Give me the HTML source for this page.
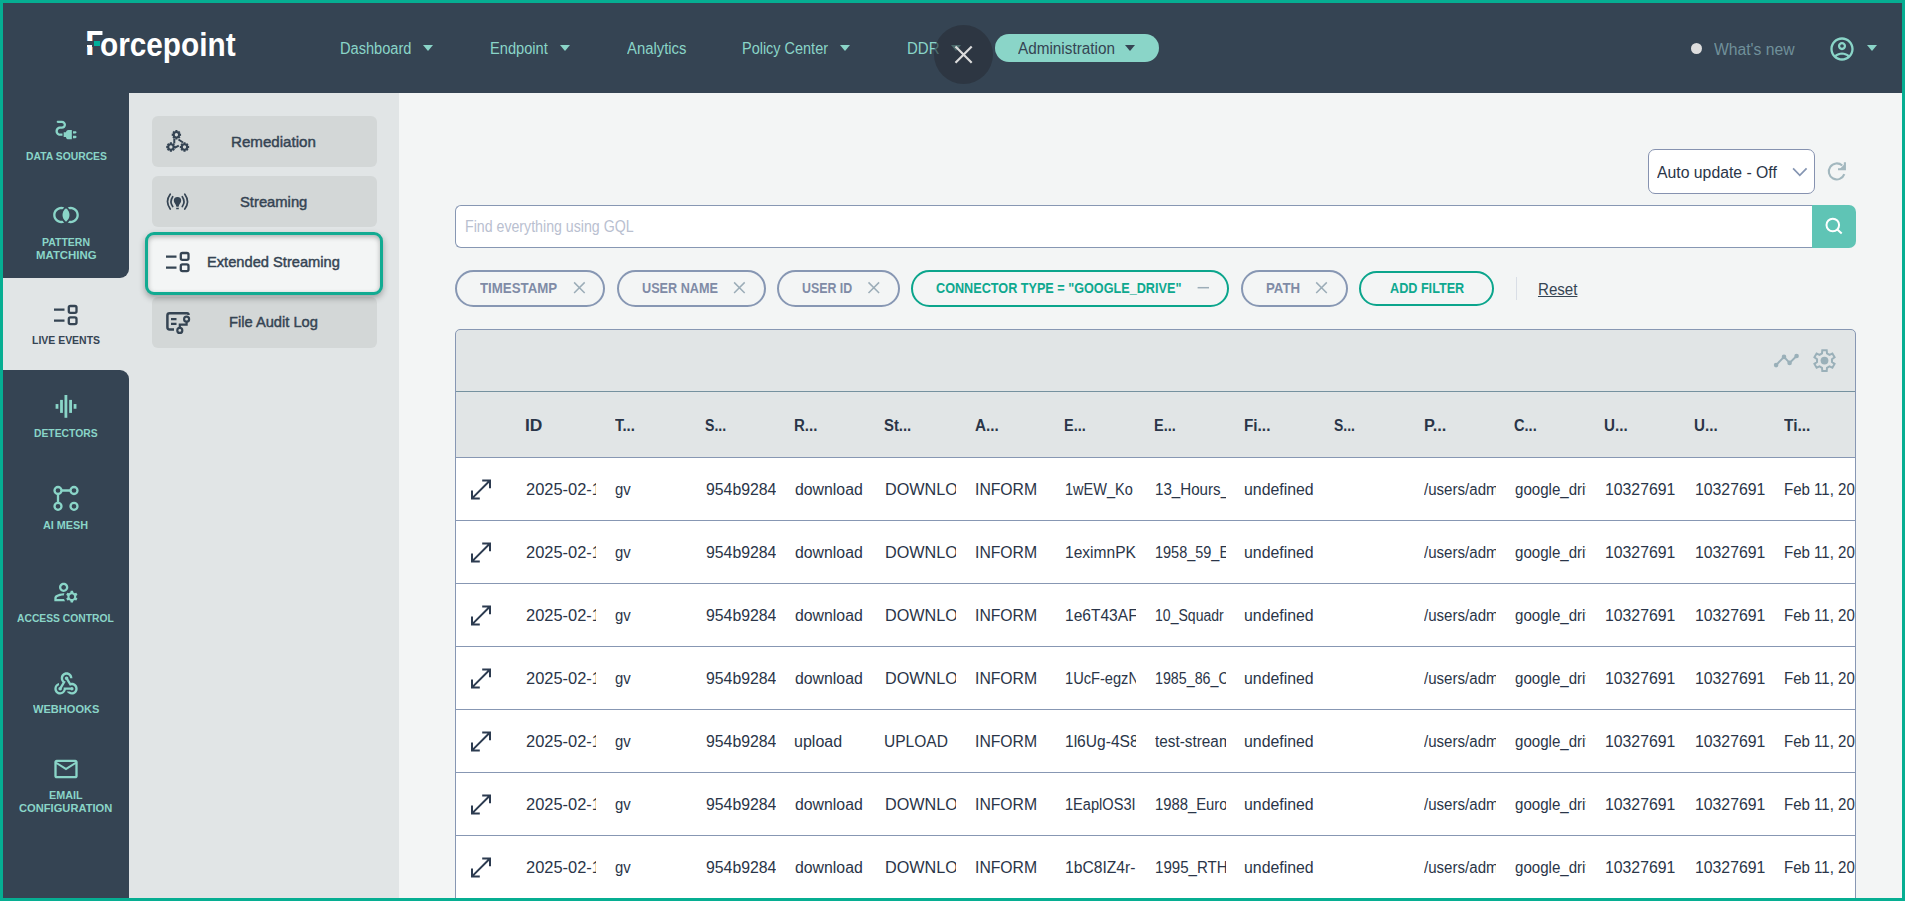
<!DOCTYPE html>
<html lang="en">
<head>
<meta charset="utf-8">
<title>Forcepoint - Extended Streaming</title>
<style>
html,body{margin:0;padding:0}
body{width:1905px;height:901px;position:relative;overflow:hidden;background:#f3f5f5;font-family:"Liberation Sans",sans-serif;color:#2a3548}
.abs,.t,svg.i{position:absolute}
.t{white-space:pre;line-height:1;transform-origin:0 0;display:block}
#frame{position:absolute;left:0;top:0;width:1899px;height:895px;border:3px solid #06ae92;z-index:50;pointer-events:none}
/* header */
#hdr{position:absolute;left:0;top:0;width:1905px;height:93px;background:#354453}
.tri{position:absolute;width:0;height:0;border-left:5.5px solid transparent;border-right:5.5px solid transparent;border-top:6.5px solid #8ad5c8}
#adminpill{position:absolute;left:995px;top:34px;width:164px;height:28px;border-radius:14px;background:#8ad5c8}
#closec{position:absolute;left:934px;top:25px;width:59px;height:59px;border-radius:50%;background:rgba(40,47,57,.64)}
#dot{position:absolute;left:1690.6px;top:42.5px;width:11px;height:11px;border-radius:50%;background:#dedede}
/* sidebar */
#side{position:absolute;left:0;top:93px;width:129px;height:808px;background:#e1e5e6}
#sidecap1{position:absolute;left:0;top:93px;width:129px;height:184.6px;background:#354453;border-bottom-right-radius:9px}
#sidecap2{position:absolute;left:0;top:370px;width:129px;height:531px;background:#354453;border-top-right-radius:9px}
/* subnav */
#sub{position:absolute;left:129px;top:93px;width:270px;height:808px;background:#e1e5e6}
.sbtn{position:absolute;left:152px;width:225px;height:51px;border-radius:6px;background:#d3d7d7}
#sact{position:absolute;left:145px;top:232px;width:232px;height:57px;border:3px solid #12ab92;border-radius:9px;background:#f3f5f5;box-shadow:0 3px 6px rgba(0,0,0,.3), inset 0 2px 5px rgba(0,0,0,.28)}
/* main */
#sel{position:absolute;left:1648px;top:149px;width:165px;height:43px;border:1px solid #8692b0;border-radius:7px;background:#fff}
#search{position:absolute;left:455px;top:205px;width:1356px;height:41px;border:1px solid #8797b3;border-right:none;border-radius:6px 0 0 6px;background:#fff}
#sbtn{position:absolute;left:1811.5px;top:205px;width:44.5px;height:43px;border-radius:0 7px 7px 0;background:#5fc4b5}
.chip{position:absolute;top:270px;height:33px;border:2px solid #8797b3;border-radius:19px;box-sizing:content-box}
.chip.tl{border-color:#0ba58c}
#vdiv{position:absolute;left:1516px;top:277px;width:1px;height:23px;background:#d9dee6}
#tbl{position:absolute;left:455px;top:329px;width:1399px;height:580px;border:1px solid #8797b3;border-radius:5px 5px 0 0;background:#e1e5e6}
#tline1{position:absolute;left:456px;top:390.5px;width:1399px;height:1px;background:#75919f}
#tline2{position:absolute;left:456px;top:457px;width:1399px;height:1px;background:#8797b3}
.row{position:absolute;left:456px;width:1399px;height:62px;background:#fff;border-bottom:1px solid #8797b3;overflow:hidden}
.c{position:absolute;top:0;width:72.5px;height:62px;overflow:hidden}
</style>
</head>
<body>
<header>
<div id="hdr"></div>
<div class="abs" id="logo" aria-label="Forcepoint"><span class="t" style="left:85.10px;top:26.20px;font-size:34.2px;font-weight:700;color:#fff;transform:scaleX(1.0000);clip-path:inset(0 3.5px 0 0);">F</span><i class="abs" style="left:86px;top:41.4px;width:20px;height:5.6px;background:#354453"></i><i class="abs" style="left:87.1px;top:45.2px;width:4.9px;height:2px;background:#fff"></i><span class="t" style="left:99.72px;top:26.50px;font-size:34px;font-weight:700;color:#fff;transform:scaleX(0.8752);">orcepoint</span><i class="abs" style="left:93.9px;top:40.5px;width:5.7px;height:5.6px;background:#00af9a"></i></div>
<nav>
<a><span class="t" style="left:340.09px;top:41.00px;font-size:16px;color:#8ad5c8;transform:scaleX(0.9126);">Dashboard</span><i class="tri" style="left:422.5px;top:45.2px"></i></a>
<a><span class="t" style="left:489.59px;top:41.00px;font-size:16px;color:#8ad5c8;transform:scaleX(0.9136);">Endpoint</span><i class="tri" style="left:560px;top:45.2px"></i></a>
<a><span class="t" style="left:627.00px;top:41.00px;font-size:16px;color:#8ad5c8;transform:scaleX(0.9278);">Analytics</span></a>
<a><span class="t" style="left:742.10px;top:41.00px;font-size:16px;color:#8ad5c8;transform:scaleX(0.9038);">Policy Center</span><i class="tri" style="left:840px;top:45.2px"></i></a>
<a><span class="t" style="left:907.26px;top:41.00px;font-size:16px;color:#8ad5c8;transform:scaleX(0.9363);">DDR</span><i class="tri" style="left:950.5px;top:45.2px"></i></a>
<a><div id="adminpill"></div><span class="t" style="left:1017.50px;top:41.00px;font-size:16px;color:#354453;transform:scaleX(0.9564);">Administration</span><i class="tri" style="left:1125px;top:45.2px;border-top-color:#354453"></i></a>
<div id="closec"></div>
<svg class="i" style="left:950px;top:41px" width="28" height="28" viewBox="950 41 28 28" ><path d="M955.5,46.500L971.700,62.700M971.700,46.500L955.5,62.700" stroke="#dcdcdc" stroke-width="2.2" fill="none"/></svg>
</nav>
<div id="dot"></div>
<span class="t" style="left:1714.00px;top:41.70px;font-size:16px;color:#70909a;transform:scaleX(0.9801);">What&#x27;s new</span>
<svg class="i" style="left:1828px;top:34.5px" width="28" height="28" viewBox="0 0 24 24" ><g fill="#8ad5c8"><path d="M12 2C6.48 2 2 6.48 2 12s4.48 10 10 10 10-4.480 10-10S17.52 2 12 2zM7.35 18.5C8.66 17.56 10.26 17 12 17s3.34.56 4.65 1.5C15.34 19.44 13.74 20 12 20s-3.34-.56-4.65-1.5zm10.79-1.38C16.45 15.8 14.32 15 12 15s-4.45.8-6.14 2.12C4.7 15.73 4 13.95 4 12c0-4.42 3.58-8 8-8s8 3.58 8 8c0 1.95-.7 3.73-1.86 5.12zM12 6c-1.93 0-3.5 1.57-3.5 3.5S10.07 13 12 13s3.5-1.57 3.5-3.5S13.93 6 12 6zm0 5c-.83 0-1.5-.67-1.5-1.5S11.17 8 12 8s1.500.67 1.5 1.5S12.830 11 12 11z"/></g></svg>
<i class="tri" style="left:1867px;top:45.3px"></i>
</header>
<aside>
<div id="side"></div>
<div id="sidecap1"></div><div id="sidecap2"></div>
<a><svg class="i" style="left:52px;top:115.6px" width="28" height="28" viewBox="0 0 24 24" ><g fill="#8ad5c8"><path d="M21,14c0-0.55-0.45-1-1-1h-2v2h2C20.55,15,21,14.55,21,14z"/><path d="M20,17h-2v2h2c0.55,0,1-0.45,1-1C21,17.45,20.55,17,20,17z"/><path d="M12,14h-2v4h2c0,1.1,0.9,2,2,2h3v-8h-3C12.9,12,12,12.9,12,14z"/><path d="M5,13c0-1.1,0.9-2,2-2h1.5c1.93,0,3.5-1.57,3.5-3.5S10.430,4,8.5,4H5C4.45,4,4,4.45,4,5c0,0.55,0.45,1,1,1h3.5C9.33,6,10,6.67,10,7.5S9.33,9,8.5,9H7c-2.21,0-4,1.79-4,4c0,2.21,1.79,4,4,4h2v-2H7C5.9,15,5,14.1,5,13z"/></g></svg><span class="t" style="left:25.60px;top:151.30px;font-size:11px;font-weight:700;color:#8ad5c8;transform:scaleX(0.9415);">DATA SOURCES</span></a>
<a><svg class="i" style="left:52px;top:201.1px" width="28" height="28" viewBox="0 0 24 24" ><g fill="#8ad5c8"><path d="M12 6.26A7 7 0 0 1 12 17.74A7 7 0 0 1 12 6.26z"/><path d="M9.04 16.87C8.71 16.95 8.36 17 8 17c-2.76 0-5-2.24-5-5s2.240-5 5-5c.36 0 .71.05 1.04.13.39-.56.88-1.120 1.490-1.630C9.750 5.190 8.900 5 8 5c-3.860 0-7 3.140-7 7s3.140 7 7 7c.9 0 1.750-.19 2.530-.5-.61-.51-1.100-1.070-1.490-1.630z"/><path d="M16 5c-.9 0-1.750.19-2.530.5.61.51 1.100 1.070 1.490 1.630.33-.08.68-.13 1.040-.13 2.760 0 5 2.240 5 5s-2.240 5-5 5c-.36 0-.71-.05-1.040-.13-.39.56-.88 1.120-1.490 1.630.78.31 1.630.5 2.530.5 3.860 0 7-3.140 7-7s-3.140-7-7-7z"/></g></svg><span class="t" style="left:42.00px;top:237.20px;font-size:11px;font-weight:700;color:#8ad5c8;transform:scaleX(0.9550);">PATTERN</span><span class="t" style="left:36.00px;top:250.30px;font-size:11px;font-weight:700;color:#8ad5c8;transform:scaleX(1.0363);">MATCHING</span></a>
<a><svg class="i" style="left:52.1px;top:302.65px" width="28" height="25" viewBox="52.1 302.65 28 25" ><g fill="none" stroke="#354453" stroke-width="2.3"><path d="M54.1,309.34999999999997h10.5M54.1,320.34999999999997h10.5" stroke-linecap="butt"/><rect x="68.9" y="305.65" width="7.7" height="6.8" rx="1.6"/><rect x="68.9" y="317.04999999999995" width="7.700" height="6.8" rx="1.6"/></g></svg><span class="t" style="left:32.30px;top:335.20px;font-size:11px;font-weight:700;color:#354453;transform:scaleX(0.9511);">LIVE EVENTS</span></a>
<a><svg class="i" style="left:52px;top:392px" width="28" height="28" viewBox="52 392 28 28" ><g fill="#8ad5c8"><rect x="55.60" y="404.05" width="2.8" height="4.7"/><rect x="60.10" y="399.90" width="2.8" height="13"/><rect x="64.50" y="395.00" width="2.8" height="22.8"/><rect x="69.20" y="399.90" width="2.8" height="13"/><rect x="73.65" y="404.05" width="2.8" height="4.7"/></g></svg><span class="t" style="left:34.30px;top:428.30px;font-size:11px;font-weight:700;color:#8ad5c8;transform:scaleX(0.9405);">DETECTORS</span></a>
<a><svg class="i" style="left:50px;top:484px" width="32" height="30" viewBox="50 484 32 30" ><g fill="none" stroke="#8ad5c8" stroke-width="2.3"><circle cx="58" cy="490.5" r="3.5"/><circle cx="74" cy="490.5" r="3.5"/><circle cx="58" cy="506.3" r="3.5"/><circle cx="74" cy="506.3" r="3.5"/><path d="M61.5,490.5H70.5M58,494V502.800"/></g></svg><span class="t" style="left:43.00px;top:520.30px;font-size:11px;font-weight:700;color:#8ad5c8;transform:scaleX(0.9849);">AI MESH</span></a>
<a><svg class="i" style="left:52px;top:577.6px" width="28" height="28" viewBox="0 0 24 24" ><g fill="#8ad5c8"><path d="M4,18v-0.65c0-0.34,0.16-0.66,0.41-0.81C6.1,15.53,8.03,15,10,15c0.03,0,0.05,0,0.08,0.01c0.1-0.7,0.3-1.37,0.59-1.98C10.45,13.01,10.23,13,10,13c-2.42,0-4.68,0.67-6.61,1.82C2.51,15.34,2,16.32,2,17.35V20h9.26c-0.42-0.6-0.75-1.28-0.97-2H4z"/><path d="M10,12c2.21,0,4-1.79,4-4s-1.79-4-4-4C7.79,4,6,5.79,6,8S7.79,12,10,12z M10,6c1.1,0,2,0.9,2,2s-0.9,2-2,2c-1.1,0-2-0.9-2-2S8.9,6,10,6z"/><path d="M20.75,16c0-0.22-0.03-0.42-0.06-0.63l1.14-1.01l-1-1.73l-1.45,0.49c-0.32-0.27-0.68-0.48-1.08-0.63L18,11h-2l-0.3,1.49c-0.4,0.15-0.76,0.36-1.08,0.63l-1.45-0.49l-1,1.73l1.14,1.01c-0.03,0.21-0.06,0.41-0.06,0.63s0.03,0.42,0.06,0.63l-1.14,1.01l1,1.73l1.45-0.49c0.32,0.27,0.68,0.48,1.08,0.63L16,21h2l0.3-1.49c0.4-0.15,0.76-0.36,1.08-0.63l1.45,0.49l1-1.73l-1.14-1.01C20.72,16.42,20.75,16.22,20.75,16z M17,18c-1.1,0-2-0.9-2-2s0.9-2,2-2s2,0.9,2,2S18.1,18,17,18z"/></g></svg><span class="t" style="left:17.30px;top:612.60px;font-size:11px;font-weight:700;color:#8ad5c8;transform:scaleX(0.9366);">ACCESS CONTROL</span></a>
<a><svg class="i" style="left:52px;top:669.5px" width="28" height="28" viewBox="0 0 24 24" ><g fill="#8ad5c8"><path d="M10,15l5.88,0c0.27-0.31,0.67-0.5,1.12-0.5c0.83,0,1.5,0.67,1.5,1.5c0,0.83-0.67,1.5-1.5,1.5c-0.44,0-0.84-0.19-1.12-0.5l-3.98,0c-0.46,2.28-2.48,4-4.9,4c-2.76,0-5-2.24-5-5c0-2.42,1.72-4.44,4-4.9l0,2.07C4.84,13.58,4,14.7,4,16c0,1.65,1.35,3,3,3s3-1.35,3-3V15z M12.5,4c1.65,0,3,1.35,3,3h2c0-2.76-2.24-5-5-5l0,0c-2.76,0-5,2.24-5,5c0,1.43,0.6,2.71,1.55,3.62l-2.35,3.9C6.02,14.66,5.5,15.27,5.5,16c0,0.83,0.67,1.5,1.5,1.5s1.5-0.67,1.5-1.5c0-0.16-0.02-0.31-0.07-0.45l3.38-5.63C10.49,9.61,9.5,8.42,9.5,7C9.5,5.35,10.85,4,12.5,4z M17,13c-0.64,0-1.23,0.2-1.72,0.54l-3.05-5.07C11.53,8.35,11,7.74,11,7c0-0.83,0.67-1.5,1.5-1.5S14,6.17,14,7c0,0.15-0.02,0.29-0.06,0.43l2.19,3.65C16.41,11.03,16.7,11,17,11l0,0c2.76,0,5,2.24,5,5c0,2.76-2.24,5-5,5c-1.85,0-3.47-1.01-4.33-2.5l2.67,0C15.82,18.82,16.39,19,17,19c1.65,0,3-1.35,3-3S18.65,13,17,13z"/></g></svg><span class="t" style="left:33.30px;top:704.00px;font-size:11px;font-weight:700;color:#8ad5c8;transform:scaleX(1.0051);">WEBHOOKS</span></a>
<a><svg class="i" style="left:52px;top:755px" width="28" height="28" viewBox="0 0 24 24" ><g fill="#8ad5c8"><path d="M20 4H4c-1.1 0-1.99.9-1.99 2L2 18c0 1.1.9 2 2 2h16c1.1 0 2-.9 2-2V6c0-1.1-.9-2-2-2zm0 14H4V8l8 5 8-5v10zm-8-7L4 6h16l-8 5z"/></g></svg><span class="t" style="left:49.20px;top:790.30px;font-size:11px;font-weight:700;color:#8ad5c8;transform:scaleX(0.9826);">EMAIL</span><span class="t" style="left:19.00px;top:803.30px;font-size:11px;font-weight:700;color:#8ad5c8;transform:scaleX(1.0139);">CONFIGURATION</span></a>
</aside>
<section>
<div id="sub"></div>
<div class="sbtn" style="top:116px"></div><svg class="i" style="left:164px;top:128px" width="28" height="26" viewBox="164 128 28 26" ><path d="M175.24,130.09L177.56,130.09L177.31,130.96L178.44,131.43L178.88,130.64L180.51,132.27L179.72,132.71L180.19,133.84L181.06,133.59L181.06,135.91L180.19,135.66L179.72,136.79L180.51,137.23L178.88,138.86L178.44,138.07L177.31,138.54L177.56,139.41L175.24,139.41L175.49,138.54L174.36,138.07L173.92,138.86L172.29,137.23L173.08,136.79L172.61,135.66L171.74,135.91L171.74,133.59L172.61,133.84L173.08,132.71L172.29,132.27L173.92,130.64L174.36,131.43L175.49,130.96ZM178.05,134.75A1.65,1.65 0 1,0 174.75,134.75A1.65,1.65 0 1,0 178.05,134.75Z" fill="#354453" fill-rule="evenodd"/><path d="M169.74,142.34L172.06,142.34L171.81,143.21L172.94,143.68L173.38,142.89L175.01,144.52L174.22,144.96L174.69,146.09L175.56,145.84L175.56,148.16L174.69,147.91L174.22,149.04L175.01,149.48L173.38,151.11L172.94,150.32L171.81,150.79L172.06,151.66L169.74,151.66L169.99,150.79L168.86,150.32L168.42,151.11L166.79,149.48L167.58,149.04L167.11,147.91L166.24,148.16L166.24,145.84L167.11,146.09L167.58,144.96L166.79,144.52L168.42,142.89L168.86,143.68L169.99,143.21ZM172.55,147.00A1.65,1.65 0 1,0 169.25,147.00A1.65,1.65 0 1,0 172.55,147.00Z" fill="#354453" fill-rule="evenodd"/><path d="M183.34,142.34L185.66,142.34L185.41,143.21L186.54,143.68L186.98,142.89L188.61,144.52L187.82,144.96L188.29,146.09L189.16,145.84L189.16,148.16L188.29,147.91L187.82,149.04L188.61,149.48L186.98,151.11L186.54,150.32L185.41,150.79L185.66,151.66L183.34,151.66L183.59,150.79L182.46,150.32L182.02,151.11L180.39,149.48L181.18,149.04L180.71,147.91L179.84,148.16L179.84,145.84L180.71,146.09L181.18,144.96L180.39,144.52L182.02,142.89L182.46,143.68L183.59,143.21ZM186.15,147.00A1.65,1.65 0 1,0 182.85,147.00A1.65,1.65 0 1,0 186.15,147.00Z" fill="#354453" fill-rule="evenodd"/><path d="M174.3,138.5V143.5M178.5,139.5L183,142.5M174.5,147.8L178.8,145.600" stroke="#354453" stroke-width="2" fill="none"/></svg><span class="t" style="left:230.99px;top:133.90px;font-size:15px;color:#354453;transform:scaleX(1.0076);-webkit-text-stroke:0.45px #354453;">Remediation</span>
<div class="sbtn" style="top:176px"></div><svg class="i" style="left:164px;top:190px" width="28" height="24" viewBox="164 190 28 24" ><path d="M177.5,197.100a3.7,3.7 0 0 1 3.700,3.700c0,2.100-2.300,3.200-2.600,5.900h-2.200c-0.300-2.700-2.600-3.800-2.600-5.900a3.700,3.700 0 0 1 3.700-3.700z" fill="#354453"/><path d="M176.2,208.500h2.600" stroke="#354453" stroke-width="1.500"/><g fill="none" stroke="#354453" stroke-width="1.700" stroke-linecap="round"><path d="M172.700,196.700q-3.400,4.900 0,9.800"/><path d="M170.200,194.200q-5.400,7.400 0,14.800"/><path d="M182.300,196.700q3.400,4.900 0,9.800"/><path d="M184.800,194.200q5.400,7.400 0,14.800"/></g></svg><span class="t" style="left:240.10px;top:193.70px;font-size:15px;color:#354453;transform:scaleX(0.9850);-webkit-text-stroke:0.45px #354453;">Streaming</span>
<div class="sbtn" style="top:296.5px"></div><svg class="i" style="left:164px;top:310px" width="28" height="26" viewBox="164 310 28 26" ><g fill="none" stroke="#354453" stroke-width="2.500"><path d="M188.5,315v-0.500a1.300,1.300 0 0 0 -1.300-1.300H169.600a2.200,2.200 0 0 0 -2.200,2.200V327.300a2.200,2.200 0 0 0 2.200,2.200H174"/><path d="M171,319.200h5.500M171,323.800h5.500" stroke-width="2.200"/></g><g fill="none" stroke="#354453" stroke-width="2.200"><circle cx="186.600" cy="319.200" r="2.500"/><circle cx="179.800" cy="330.400" r="2.500"/><path d="M186.600,321.700V324.600H179.800V327.900"/></g></svg><span class="t" style="left:228.72px;top:313.80px;font-size:15px;color:#354453;transform:scaleX(0.9781);-webkit-text-stroke:0.45px #354453;">File Audit Log</span>
<div id="sact"></div><svg class="i" style="left:164.2px;top:249.6px" width="28" height="25" viewBox="164.2 249.6 28 25" ><g fill="none" stroke="#354453" stroke-width="2.3"><path d="M166.2,256.3h10.5M166.2,267.3h10.5" stroke-linecap="butt"/><rect x="181.0" y="252.6" width="7.7" height="6.8" rx="1.6"/><rect x="181.0" y="264.0" width="7.700" height="6.8" rx="1.6"/></g></svg><span class="t" style="left:207.02px;top:253.90px;font-size:15px;color:#354453;transform:scaleX(0.9779);-webkit-text-stroke:0.45px #354453;">Extended Streaming</span>
</section>
<main>
<div id="sel"></div><span class="t" style="left:1657.40px;top:164.90px;font-size:16px;color:#2a3548;transform:scaleX(0.9859);">Auto update - Off</span><svg class="i" style="left:1790px;top:165px" width="20" height="14" viewBox="1790 165 20 14" ><path d="M1793.100,168.400L1799.800,175.300L1806.600,168.400" fill="none" stroke="#8595b2" stroke-width="1.700"/></svg><svg class="i" style="left:1825px;top:159px" width="26" height="24" viewBox="1825 159 26 24" ><g fill="none" stroke="#a3b8bf" stroke-width="2.100"><path d="M1842.26,165.55A8.0,8.0 0 1 0 1844.32,174.14"/><path d="M1838,169.200H1844.900V162.300"/></g><path d="M1839.500,169.200L1844.900,163.800V169.200z" fill="#a3b8bf"/></svg>
<div id="search"></div><span class="t" style="left:465.01px;top:219.40px;font-size:16px;color:#b9c0d0;transform:scaleX(0.8859);">Find everything using GQL</span>
<div id="sbtn"></div><svg class="i" style="left:1822px;top:215px" width="24" height="22" viewBox="1822 215 24 22" ><g fill="none" stroke="#fff" stroke-width="2"><circle cx="1832.800" cy="225" r="6.300"/><path d="M1837.300,229.500L1841.700,233.500"/></g></svg>
<div class="chip" style="left:455px;width:146.2px"></div><span class="t" style="left:480.30px;top:281.00px;font-size:14px;font-weight:700;color:#7f8ba6;transform:scaleX(0.9486);">TIMESTAMP</span>
<div class="chip" style="left:617px;width:145.2px"></div><span class="t" style="left:641.60px;top:281.00px;font-size:14px;font-weight:700;color:#7f8ba6;transform:scaleX(0.9036);">USER NAME</span>
<div class="chip" style="left:777px;width:119px"></div><span class="t" style="left:801.60px;top:281.00px;font-size:14px;font-weight:700;color:#7f8ba6;transform:scaleX(0.8840);">USER ID</span>
<div class="chip tl" style="left:911.2px;width:314px"></div><span class="t" style="left:936.00px;top:281.00px;font-size:14px;font-weight:700;color:#0ea88f;transform:scaleX(0.9032);">CONNECTOR TYPE = &quot;GOOGLE_DRIVE&quot;</span>
<div class="chip" style="left:1241.2px;width:103px"></div><span class="t" style="left:1265.70px;top:281.00px;font-size:14px;font-weight:700;color:#7f8ba6;transform:scaleX(0.9465);">PATH</span>
<div class="chip tl" style="left:1359.2px;width:130.6px;top:271px;height:31px"></div><span class="t" style="left:1389.60px;top:281.00px;font-size:14px;font-weight:700;color:#0ea88f;transform:scaleX(0.9029);">ADD FILTER</span>
<svg class="i" style="left:560px;top:278px" width="780" height="20" viewBox="560 278 780 20" ><path d="M574.1,282.4L584.6999999999999,293.0M584.6999999999999,282.4L574.1,293.0" stroke="#9cadb8" stroke-width="1.500" fill="none"/><path d="M734.1,282.4L744.6999999999999,293.0M744.6999999999999,282.4L734.1,293.0" stroke="#9cadb8" stroke-width="1.500" fill="none"/><path d="M868.5,282.4L879.0999999999999,293.0M879.0999999999999,282.4L868.5,293.0" stroke="#9cadb8" stroke-width="1.500" fill="none"/><path d="M1316.2,282.4L1326.8,293.0M1326.8,282.4L1316.2,293.0" stroke="#9cadb8" stroke-width="1.500" fill="none"/><path d="M1197.600,287.700H1209" stroke="#9cadb8" stroke-width="1.500"/></svg>
<div id="vdiv"></div>
<span class="t" style="left:1538.06px;top:281.50px;font-size:16px;color:#354453;transform:scaleX(0.9431);text-decoration:underline;">Reset</span>
<div id="tbl"></div>
<svg class="i" style="left:1772px;top:350px" width="30" height="20" viewBox="1772 350 30 20" ><g fill="#9ab0b9"><circle cx="1776.100" cy="365.100" r="2.300"/><circle cx="1784" cy="356.900" r="2.300"/><circle cx="1789.600" cy="362.900" r="2.300"/><circle cx="1796.600" cy="356" r="2.300"/></g><path d="M1776.100,365.100L1784,356.900L1789.600,362.900L1796.600,356" stroke="#9ab0b9" stroke-width="2" fill="none"/></svg><svg class="i" style="left:1811px;top:347px" width="28" height="28" viewBox="1811 347 28 28" ><path d="M1822.30,350.23L1826.70,350.23L1827.00,353.42L1829.47,354.85L1832.38,353.51L1834.58,357.32L1831.97,359.18L1831.97,362.02L1834.58,363.88L1832.38,367.69L1829.47,366.35L1827.00,367.78L1826.70,370.97L1822.30,370.97L1822.00,367.78L1819.53,366.35L1816.62,367.69L1814.42,363.88L1817.03,362.02L1817.03,359.18L1814.42,357.32L1816.62,353.51L1819.53,354.85L1822.00,353.42Z" fill="none" stroke="#9ab0b9" stroke-width="2" stroke-linejoin="miter"/><circle cx="1824.5" cy="360.6" r="3.900" fill="#9ab0b9"/></svg>
<div id="tline1"></div><div id="tline2"></div>
<span class="t" style="left:524.61px;top:418.00px;font-size:16px;font-weight:700;color:#2a3548;transform:scaleX(1.0869);">ID</span><span class="t" style="left:615.10px;top:418.00px;font-size:16px;font-weight:700;color:#2a3548;transform:scaleX(0.9334);">T...</span><span class="t" style="left:704.60px;top:418.00px;font-size:16px;font-weight:700;color:#2a3548;transform:scaleX(0.8828);">S...</span><span class="t" style="left:794.06px;top:418.00px;font-size:16px;font-weight:700;color:#2a3548;transform:scaleX(0.9384);">R...</span><span class="t" style="left:884.40px;top:418.00px;font-size:16px;font-weight:700;color:#2a3548;transform:scaleX(0.9276);">St...</span><span class="t" style="left:974.50px;top:418.00px;font-size:16px;font-weight:700;color:#2a3548;transform:scaleX(0.9531);">A...</span><span class="t" style="left:1064.10px;top:418.00px;font-size:16px;font-weight:700;color:#2a3548;transform:scaleX(0.9042);">E...</span><span class="t" style="left:1154.00px;top:418.00px;font-size:16px;font-weight:700;color:#2a3548;transform:scaleX(0.9042);">E...</span><span class="t" style="left:1243.84px;top:418.00px;font-size:16px;font-weight:700;color:#2a3548;transform:scaleX(0.9575);">Fi...</span><span class="t" style="left:1334.20px;top:418.00px;font-size:16px;font-weight:700;color:#2a3548;transform:scaleX(0.8700);">S...</span><span class="t" style="left:1423.58px;top:418.00px;font-size:16px;font-weight:700;color:#2a3548;transform:scaleX(1.0195);">P...</span><span class="t" style="left:1514.00px;top:418.00px;font-size:16px;font-weight:700;color:#2a3548;transform:scaleX(0.9122);">C...</span><span class="t" style="left:1604.40px;top:418.00px;font-size:16px;font-weight:700;color:#2a3548;transform:scaleX(0.9491);">U...</span><span class="t" style="left:1694.30px;top:418.00px;font-size:16px;font-weight:700;color:#2a3548;transform:scaleX(0.9491);">U...</span><span class="t" style="left:1783.80px;top:418.00px;font-size:16px;font-weight:700;color:#2a3548;transform:scaleX(0.9657);">Ti...</span>
<div class="row" style="top:458px"><svg class="i" style="left:12px;top:19px" width="26" height="26" viewBox="468 477 26 26"><path d="M472.300,498.100L489.700,480.700M482.200,480.400H490V488.200M472,490.600V498.400H479.800" fill="none" stroke="#2c3b50" stroke-width="2"/></svg><div class="c" style="left:67px"><span class="t" style="left:2.60px;top:23.60px;font-size:16px;color:#2a3548;transform:scaleX(1.0280);">2025-02-11T0</span></div><div class="c" style="left:157px"><span class="t" style="left:2.00px;top:23.60px;font-size:16px;color:#2a3548;transform:scaleX(0.9291);">gv</span></div><div class="c" style="left:247px"><span class="t" style="left:2.70px;top:23.60px;font-size:16px;color:#2a3548;transform:scaleX(0.9889);">954b9284</span></div><div class="c" style="left:337px"><span class="t" style="left:2.10px;top:23.60px;font-size:16px;color:#2a3548;transform:scaleX(0.9896);">download</span></div><div class="c" style="left:427px"><span class="t" style="left:1.59px;top:23.60px;font-size:16px;color:#2a3548;transform:scaleX(1.0127);">DOWNLOAD</span></div><div class="c" style="left:517px"><span class="t" style="left:1.52px;top:23.60px;font-size:16px;color:#2a3548;transform:scaleX(0.9842);">INFORM</span></div><div class="c" style="left:607px"><span class="t" style="left:2.39px;top:23.60px;font-size:16px;color:#2a3548;transform:scaleX(0.9075);">1wEW_Ko</span></div><div class="c" style="left:697px"><span class="t" style="left:2.05px;top:23.60px;font-size:16px;color:#2a3548;transform:scaleX(0.9463);">13_Hours_o</span></div><div class="c" style="left:787px"><span class="t" style="left:0.71px;top:23.60px;font-size:16px;color:#2a3548;transform:scaleX(0.9914);">undefined</span></div><div class="c" style="left:967px"><span class="t" style="left:1.00px;top:23.60px;font-size:16px;color:#2a3548;transform:scaleX(0.9428);">/users/admin</span></div><div class="c" style="left:1057px"><span class="t" style="left:1.50px;top:23.60px;font-size:16px;color:#2a3548;transform:scaleX(0.9424);">google_drive</span></div><div class="c" style="left:1147px"><span class="t" style="left:1.61px;top:23.60px;font-size:16px;color:#2a3548;transform:scaleX(0.9874);">10327691</span></div><div class="c" style="left:1237px"><span class="t" style="left:1.61px;top:23.60px;font-size:16px;color:#2a3548;transform:scaleX(0.9874);">10327691</span></div><div class="c" style="left:1327px"><span class="t" style="left:0.86px;top:23.60px;font-size:16px;color:#2a3548;transform:scaleX(0.9393);">Feb 11, 20</span></div></div>
<div class="row" style="top:521px"><svg class="i" style="left:12px;top:19px" width="26" height="26" viewBox="468 477 26 26"><path d="M472.300,498.100L489.700,480.700M482.200,480.400H490V488.200M472,490.600V498.400H479.800" fill="none" stroke="#2c3b50" stroke-width="2"/></svg><div class="c" style="left:67px"><span class="t" style="left:2.60px;top:23.60px;font-size:16px;color:#2a3548;transform:scaleX(1.0280);">2025-02-11T0</span></div><div class="c" style="left:157px"><span class="t" style="left:2.00px;top:23.60px;font-size:16px;color:#2a3548;transform:scaleX(0.9291);">gv</span></div><div class="c" style="left:247px"><span class="t" style="left:2.70px;top:23.60px;font-size:16px;color:#2a3548;transform:scaleX(0.9889);">954b9284</span></div><div class="c" style="left:337px"><span class="t" style="left:2.10px;top:23.60px;font-size:16px;color:#2a3548;transform:scaleX(0.9896);">download</span></div><div class="c" style="left:427px"><span class="t" style="left:1.59px;top:23.60px;font-size:16px;color:#2a3548;transform:scaleX(1.0127);">DOWNLOAD</span></div><div class="c" style="left:517px"><span class="t" style="left:1.52px;top:23.60px;font-size:16px;color:#2a3548;transform:scaleX(0.9842);">INFORM</span></div><div class="c" style="left:607px"><span class="t" style="left:2.33px;top:23.60px;font-size:16px;color:#2a3548;transform:scaleX(0.9723);">1eximnPK</span></div><div class="c" style="left:697px"><span class="t" style="left:2.10px;top:23.60px;font-size:16px;color:#2a3548;transform:scaleX(0.9048);">1958_59_E</span></div><div class="c" style="left:787px"><span class="t" style="left:0.71px;top:23.60px;font-size:16px;color:#2a3548;transform:scaleX(0.9914);">undefined</span></div><div class="c" style="left:967px"><span class="t" style="left:1.00px;top:23.60px;font-size:16px;color:#2a3548;transform:scaleX(0.9428);">/users/admin</span></div><div class="c" style="left:1057px"><span class="t" style="left:1.50px;top:23.60px;font-size:16px;color:#2a3548;transform:scaleX(0.9424);">google_drive</span></div><div class="c" style="left:1147px"><span class="t" style="left:1.61px;top:23.60px;font-size:16px;color:#2a3548;transform:scaleX(0.9874);">10327691</span></div><div class="c" style="left:1237px"><span class="t" style="left:1.61px;top:23.60px;font-size:16px;color:#2a3548;transform:scaleX(0.9874);">10327691</span></div><div class="c" style="left:1327px"><span class="t" style="left:0.86px;top:23.60px;font-size:16px;color:#2a3548;transform:scaleX(0.9393);">Feb 11, 20</span></div></div>
<div class="row" style="top:584px"><svg class="i" style="left:12px;top:19px" width="26" height="26" viewBox="468 477 26 26"><path d="M472.300,498.100L489.700,480.700M482.200,480.400H490V488.200M472,490.600V498.400H479.800" fill="none" stroke="#2c3b50" stroke-width="2"/></svg><div class="c" style="left:67px"><span class="t" style="left:2.60px;top:23.60px;font-size:16px;color:#2a3548;transform:scaleX(1.0280);">2025-02-11T0</span></div><div class="c" style="left:157px"><span class="t" style="left:2.00px;top:23.60px;font-size:16px;color:#2a3548;transform:scaleX(0.9291);">gv</span></div><div class="c" style="left:247px"><span class="t" style="left:2.70px;top:23.60px;font-size:16px;color:#2a3548;transform:scaleX(0.9889);">954b9284</span></div><div class="c" style="left:337px"><span class="t" style="left:2.10px;top:23.60px;font-size:16px;color:#2a3548;transform:scaleX(0.9896);">download</span></div><div class="c" style="left:427px"><span class="t" style="left:1.59px;top:23.60px;font-size:16px;color:#2a3548;transform:scaleX(1.0127);">DOWNLOAD</span></div><div class="c" style="left:517px"><span class="t" style="left:1.52px;top:23.60px;font-size:16px;color:#2a3548;transform:scaleX(0.9842);">INFORM</span></div><div class="c" style="left:607px"><span class="t" style="left:2.33px;top:23.60px;font-size:16px;color:#2a3548;transform:scaleX(0.9725);">1e6T43AF</span></div><div class="c" style="left:697px"><span class="t" style="left:2.12px;top:23.60px;font-size:16px;color:#2a3548;transform:scaleX(0.8781);">10_Squadr</span></div><div class="c" style="left:787px"><span class="t" style="left:0.71px;top:23.60px;font-size:16px;color:#2a3548;transform:scaleX(0.9914);">undefined</span></div><div class="c" style="left:967px"><span class="t" style="left:1.00px;top:23.60px;font-size:16px;color:#2a3548;transform:scaleX(0.9428);">/users/admin</span></div><div class="c" style="left:1057px"><span class="t" style="left:1.50px;top:23.60px;font-size:16px;color:#2a3548;transform:scaleX(0.9424);">google_drive</span></div><div class="c" style="left:1147px"><span class="t" style="left:1.61px;top:23.60px;font-size:16px;color:#2a3548;transform:scaleX(0.9874);">10327691</span></div><div class="c" style="left:1237px"><span class="t" style="left:1.61px;top:23.60px;font-size:16px;color:#2a3548;transform:scaleX(0.9874);">10327691</span></div><div class="c" style="left:1327px"><span class="t" style="left:0.86px;top:23.60px;font-size:16px;color:#2a3548;transform:scaleX(0.9393);">Feb 11, 20</span></div></div>
<div class="row" style="top:647px"><svg class="i" style="left:12px;top:19px" width="26" height="26" viewBox="468 477 26 26"><path d="M472.300,498.100L489.700,480.700M482.200,480.400H490V488.200M472,490.600V498.400H479.800" fill="none" stroke="#2c3b50" stroke-width="2"/></svg><div class="c" style="left:67px"><span class="t" style="left:2.60px;top:23.60px;font-size:16px;color:#2a3548;transform:scaleX(1.0280);">2025-02-11T0</span></div><div class="c" style="left:157px"><span class="t" style="left:2.00px;top:23.60px;font-size:16px;color:#2a3548;transform:scaleX(0.9291);">gv</span></div><div class="c" style="left:247px"><span class="t" style="left:2.70px;top:23.60px;font-size:16px;color:#2a3548;transform:scaleX(0.9889);">954b9284</span></div><div class="c" style="left:337px"><span class="t" style="left:2.10px;top:23.60px;font-size:16px;color:#2a3548;transform:scaleX(0.9896);">download</span></div><div class="c" style="left:427px"><span class="t" style="left:1.59px;top:23.60px;font-size:16px;color:#2a3548;transform:scaleX(1.0127);">DOWNLOAD</span></div><div class="c" style="left:517px"><span class="t" style="left:1.52px;top:23.60px;font-size:16px;color:#2a3548;transform:scaleX(0.9842);">INFORM</span></div><div class="c" style="left:607px"><span class="t" style="left:2.39px;top:23.60px;font-size:16px;color:#2a3548;transform:scaleX(0.9144);">1UcF-egzN</span></div><div class="c" style="left:697px"><span class="t" style="left:2.11px;top:23.60px;font-size:16px;color:#2a3548;transform:scaleX(0.8907);">1985_86_C</span></div><div class="c" style="left:787px"><span class="t" style="left:0.71px;top:23.60px;font-size:16px;color:#2a3548;transform:scaleX(0.9914);">undefined</span></div><div class="c" style="left:967px"><span class="t" style="left:1.00px;top:23.60px;font-size:16px;color:#2a3548;transform:scaleX(0.9428);">/users/admin</span></div><div class="c" style="left:1057px"><span class="t" style="left:1.50px;top:23.60px;font-size:16px;color:#2a3548;transform:scaleX(0.9424);">google_drive</span></div><div class="c" style="left:1147px"><span class="t" style="left:1.61px;top:23.60px;font-size:16px;color:#2a3548;transform:scaleX(0.9874);">10327691</span></div><div class="c" style="left:1237px"><span class="t" style="left:1.61px;top:23.60px;font-size:16px;color:#2a3548;transform:scaleX(0.9874);">10327691</span></div><div class="c" style="left:1327px"><span class="t" style="left:0.86px;top:23.60px;font-size:16px;color:#2a3548;transform:scaleX(0.9393);">Feb 11, 20</span></div></div>
<div class="row" style="top:710px"><svg class="i" style="left:12px;top:19px" width="26" height="26" viewBox="468 477 26 26"><path d="M472.300,498.100L489.700,480.700M482.200,480.400H490V488.200M472,490.600V498.400H479.800" fill="none" stroke="#2c3b50" stroke-width="2"/></svg><div class="c" style="left:67px"><span class="t" style="left:2.60px;top:23.60px;font-size:16px;color:#2a3548;transform:scaleX(1.0280);">2025-02-11T0</span></div><div class="c" style="left:157px"><span class="t" style="left:2.00px;top:23.60px;font-size:16px;color:#2a3548;transform:scaleX(0.9291);">gv</span></div><div class="c" style="left:247px"><span class="t" style="left:2.70px;top:23.60px;font-size:16px;color:#2a3548;transform:scaleX(0.9889);">954b9284</span></div><div class="c" style="left:337px"><span class="t" style="left:1.10px;top:23.60px;font-size:16px;color:#2a3548;transform:scaleX(1.0011);">upload</span></div><div class="c" style="left:427px"><span class="t" style="left:1.43px;top:23.60px;font-size:16px;color:#2a3548;transform:scaleX(0.9713);">UPLOAD</span></div><div class="c" style="left:517px"><span class="t" style="left:1.52px;top:23.60px;font-size:16px;color:#2a3548;transform:scaleX(0.9842);">INFORM</span></div><div class="c" style="left:607px"><span class="t" style="left:2.33px;top:23.60px;font-size:16px;color:#2a3548;transform:scaleX(0.9734);">1l6Ug-4S8</span></div><div class="c" style="left:697px"><span class="t" style="left:2.20px;top:23.60px;font-size:16px;color:#2a3548;transform:scaleX(0.9582);">test-stream</span></div><div class="c" style="left:787px"><span class="t" style="left:0.71px;top:23.60px;font-size:16px;color:#2a3548;transform:scaleX(0.9914);">undefined</span></div><div class="c" style="left:967px"><span class="t" style="left:1.00px;top:23.60px;font-size:16px;color:#2a3548;transform:scaleX(0.9428);">/users/admin</span></div><div class="c" style="left:1057px"><span class="t" style="left:1.50px;top:23.60px;font-size:16px;color:#2a3548;transform:scaleX(0.9424);">google_drive</span></div><div class="c" style="left:1147px"><span class="t" style="left:1.61px;top:23.60px;font-size:16px;color:#2a3548;transform:scaleX(0.9874);">10327691</span></div><div class="c" style="left:1237px"><span class="t" style="left:1.61px;top:23.60px;font-size:16px;color:#2a3548;transform:scaleX(0.9874);">10327691</span></div><div class="c" style="left:1327px"><span class="t" style="left:0.86px;top:23.60px;font-size:16px;color:#2a3548;transform:scaleX(0.9393);">Feb 11, 20</span></div></div>
<div class="row" style="top:773px"><svg class="i" style="left:12px;top:19px" width="26" height="26" viewBox="468 477 26 26"><path d="M472.300,498.100L489.700,480.700M482.200,480.400H490V488.200M472,490.600V498.400H479.800" fill="none" stroke="#2c3b50" stroke-width="2"/></svg><div class="c" style="left:67px"><span class="t" style="left:2.60px;top:23.60px;font-size:16px;color:#2a3548;transform:scaleX(1.0280);">2025-02-11T0</span></div><div class="c" style="left:157px"><span class="t" style="left:2.00px;top:23.60px;font-size:16px;color:#2a3548;transform:scaleX(0.9291);">gv</span></div><div class="c" style="left:247px"><span class="t" style="left:2.70px;top:23.60px;font-size:16px;color:#2a3548;transform:scaleX(0.9889);">954b9284</span></div><div class="c" style="left:337px"><span class="t" style="left:2.10px;top:23.60px;font-size:16px;color:#2a3548;transform:scaleX(0.9896);">download</span></div><div class="c" style="left:427px"><span class="t" style="left:1.59px;top:23.60px;font-size:16px;color:#2a3548;transform:scaleX(1.0127);">DOWNLOAD</span></div><div class="c" style="left:517px"><span class="t" style="left:1.52px;top:23.60px;font-size:16px;color:#2a3548;transform:scaleX(0.9842);">INFORM</span></div><div class="c" style="left:607px"><span class="t" style="left:2.39px;top:23.60px;font-size:16px;color:#2a3548;transform:scaleX(0.9120);">1EaplOS3I</span></div><div class="c" style="left:697px"><span class="t" style="left:2.07px;top:23.60px;font-size:16px;color:#2a3548;transform:scaleX(0.9267);">1988_Euro</span></div><div class="c" style="left:787px"><span class="t" style="left:0.71px;top:23.60px;font-size:16px;color:#2a3548;transform:scaleX(0.9914);">undefined</span></div><div class="c" style="left:967px"><span class="t" style="left:1.00px;top:23.60px;font-size:16px;color:#2a3548;transform:scaleX(0.9428);">/users/admin</span></div><div class="c" style="left:1057px"><span class="t" style="left:1.50px;top:23.60px;font-size:16px;color:#2a3548;transform:scaleX(0.9424);">google_drive</span></div><div class="c" style="left:1147px"><span class="t" style="left:1.61px;top:23.60px;font-size:16px;color:#2a3548;transform:scaleX(0.9874);">10327691</span></div><div class="c" style="left:1237px"><span class="t" style="left:1.61px;top:23.60px;font-size:16px;color:#2a3548;transform:scaleX(0.9874);">10327691</span></div><div class="c" style="left:1327px"><span class="t" style="left:0.86px;top:23.60px;font-size:16px;color:#2a3548;transform:scaleX(0.9393);">Feb 11, 20</span></div></div>
<div class="row" style="top:836px"><svg class="i" style="left:12px;top:19px" width="26" height="26" viewBox="468 477 26 26"><path d="M472.300,498.100L489.700,480.700M482.200,480.400H490V488.200M472,490.600V498.400H479.800" fill="none" stroke="#2c3b50" stroke-width="2"/></svg><div class="c" style="left:67px"><span class="t" style="left:2.60px;top:23.60px;font-size:16px;color:#2a3548;transform:scaleX(1.0280);">2025-02-11T0</span></div><div class="c" style="left:157px"><span class="t" style="left:2.00px;top:23.60px;font-size:16px;color:#2a3548;transform:scaleX(0.9291);">gv</span></div><div class="c" style="left:247px"><span class="t" style="left:2.70px;top:23.60px;font-size:16px;color:#2a3548;transform:scaleX(0.9889);">954b9284</span></div><div class="c" style="left:337px"><span class="t" style="left:2.10px;top:23.60px;font-size:16px;color:#2a3548;transform:scaleX(0.9896);">download</span></div><div class="c" style="left:427px"><span class="t" style="left:1.59px;top:23.60px;font-size:16px;color:#2a3548;transform:scaleX(1.0127);">DOWNLOAD</span></div><div class="c" style="left:517px"><span class="t" style="left:1.52px;top:23.60px;font-size:16px;color:#2a3548;transform:scaleX(0.9842);">INFORM</span></div><div class="c" style="left:607px"><span class="t" style="left:2.32px;top:23.60px;font-size:16px;color:#2a3548;transform:scaleX(0.9779);">1bC8IZ4r-</span></div><div class="c" style="left:697px"><span class="t" style="left:2.06px;top:23.60px;font-size:16px;color:#2a3548;transform:scaleX(0.9420);">1995_RTH</span></div><div class="c" style="left:787px"><span class="t" style="left:0.71px;top:23.60px;font-size:16px;color:#2a3548;transform:scaleX(0.9914);">undefined</span></div><div class="c" style="left:967px"><span class="t" style="left:1.00px;top:23.60px;font-size:16px;color:#2a3548;transform:scaleX(0.9428);">/users/admin</span></div><div class="c" style="left:1057px"><span class="t" style="left:1.50px;top:23.60px;font-size:16px;color:#2a3548;transform:scaleX(0.9424);">google_drive</span></div><div class="c" style="left:1147px"><span class="t" style="left:1.61px;top:23.60px;font-size:16px;color:#2a3548;transform:scaleX(0.9874);">10327691</span></div><div class="c" style="left:1237px"><span class="t" style="left:1.61px;top:23.60px;font-size:16px;color:#2a3548;transform:scaleX(0.9874);">10327691</span></div><div class="c" style="left:1327px"><span class="t" style="left:0.86px;top:23.60px;font-size:16px;color:#2a3548;transform:scaleX(0.9393);">Feb 11, 20</span></div></div>
</main>
<div id="frame"></div>
</body>
</html>
